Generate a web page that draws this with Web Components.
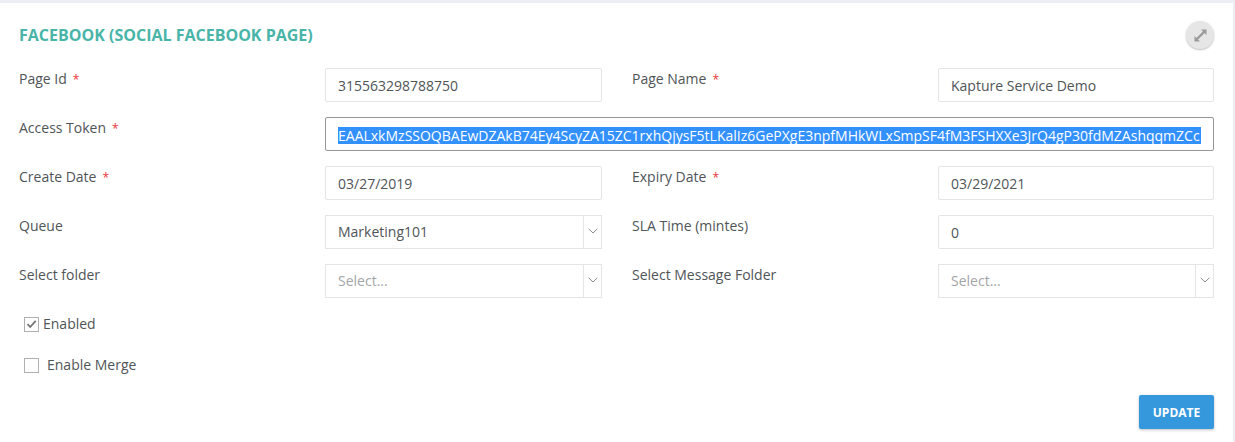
<!DOCTYPE html>
<html>
<head>
<meta charset="utf-8">
<title>Facebook page</title>
<style>
  html, body { margin: 0; padding: 0; background: #fff; }
  body { font-family: "Open Sans", "Liberation Sans", sans-serif; font-size: 14px; color: #505558; }
</style>
</head>
<body>
<fb-card heading="FACEBOOK (SOCIAL FACEBOOK PAGE)">
  <form-label required>Page Id</form-label>
  <text-field>315563298788750</text-field>
  <form-label second required>Page Name</form-label>
  <text-field>Kapture Service Demo</text-field>

  <form-label required>Access Token</form-label>
  <text-field wide selected>EAALxkMzSSOQBAEwDZAkB74Ey4ScyZA15ZC1rxhQjysF5tLKalIz6GePXgE3npfMHkWLxSmpSF4fM3FSHXXe3JrQ4gP30fdMZAshqqmZCc</text-field>

  <form-label required>Create Date</form-label>
  <text-field>03/27/2019</text-field>
  <form-label second required>Expiry Date</form-label>
  <text-field>03/29/2021</text-field>

  <form-label>Queue</form-label>
  <select-field>Marketing101</select-field>
  <form-label second>SLA Time (mintes)</form-label>
  <text-field>0</text-field>

  <form-label>Select folder</form-label>
  <select-field placeholder>Select...</select-field>
  <form-label second>Select Message Folder</form-label>
  <select-field placeholder>Select...</select-field>

  <check-box slot="checks" checked>Enabled</check-box>
  <check-box slot="checks" spaced>Enable Merge</check-box>
  <action-button slot="actions">UPDATE</action-button>
</fb-card>

<script>
// ---- 共通の定義ヘルパー ----
function define(name, css, html, setup) {
  class El extends HTMLElement {
    constructor() {
      super();
      this.attachShadow({ mode: 'open' }).innerHTML = `<style>${css}</style>${html}`;
    }
    connectedCallback() {
      if (setup) setup(this);
    }
  }
  customElements.define(name, El);
}

define('fb-card', `
  :host { display: block; box-sizing: border-box; height: 442px; border-top: 3px solid #eceef3; border-right: 2px solid #eceef3; background: #fff; }
  header { display: flex; justify-content: space-between; align-items: center; height: 65px; padding: 0 19px 0 19px; }
  h2 { margin: 0; font-size: 16px; font-weight: 700; color: #48b5a8; line-height: 22px; position: relative; top: -1px; }
  .expand { width: 28px; height: 28px; border-radius: 50%; background: #e6e6e6; box-shadow: 0 1px 2px rgba(0,0,0,.25); display: flex; align-items: center; justify-content: center; margin-top: -1px; }
  .grid { display: grid; grid-template-columns: 306px 277px 336px 276px; row-gap: 15px; padding-left: 19px; }
  .checks { display: flex; flex-direction: column; padding: 16px 0 0 24px; gap: 21px; }
  .actions { display: flex; justify-content: flex-end; width: 1214px; margin-top: 20px; }
`, `
  <header>
    <h2 id="t"></h2>
    <div class="expand"><svg width="15" height="15" viewBox="0 0 15 15"><path d="M3.5 11.5 11.5 3.5" stroke="#9a9a9a" stroke-width="2.4"/><path d="M8 1.5h5.5V7z M1.5 8v5.5H7z" fill="#9a9a9a"/></svg></div>
  </header>
  <div class="grid"><slot></slot></div>
  <div class="checks"><slot name="checks"></slot></div>
  <div class="actions"><slot name="actions"></slot></div>
`, (el) => {
  el.shadowRoot.getElementById('t').textContent = el.getAttribute('heading');
});

define('form-label', `
  :host { display: block; line-height: 20px; color: #505558; padding-top: 1px; }
  :host([second]) { padding-left: 30px; }
  .req { display: none; color: #e8343a; margin-left: 6px; font-size: 12px; }
  :host([required]) .req { display: inline; }
`, `<slot></slot><span class="req">*</span>`);

define('text-field', `
  :host { display: block; height: 34px; box-sizing: border-box; border: 1px solid #e5e5e5; border-radius: 2px; background: #fff; padding: 0 12px; line-height: 33px; color: #505558; white-space: nowrap; overflow: hidden; }
  :host([wide]) { grid-column: 2 / 5; border-color: #969696; }
  :host([selected]) .v { background: #3390ff; color: #fff; display: block; overflow: hidden; line-height: 17px; margin-top: 9px; }
`, `<span class="v"><slot></slot></span>`);

define('select-field', `
  :host { display: flex; height: 34px; box-sizing: border-box; border: 1px solid #e5e5e5; background: #fff; line-height: 31px; color: #505558; }
  :host([placeholder]) { color: #a3a5a8; }
  .v { flex: 1; padding: 0 12px; white-space: nowrap; overflow: hidden; }
  .arrow { width: 18px; border-left: 1px solid #e5e5e5; display: flex; align-items: center; justify-content: center; padding-bottom: 2px; box-sizing: border-box; }
`, `<div class="v"><slot></slot></div><div class="arrow"><svg width="10" height="6" viewBox="0 0 10 6"><path d="M.6.8 5 5 9.4.8" fill="none" stroke="#8a8a8a" stroke-width="1"/></svg></div>`);

define('check-box', `
  :host { display: flex; align-items: center; height: 20px; color: #505558; line-height: 20px; gap: 4px; }
  :host([spaced]) { gap: 8px; }
  .box { width: 15px; height: 15px; box-sizing: border-box; border: 1px solid #b0b0b0; display: flex; align-items: center; justify-content: center; background: #fff; }
  svg { display: none; }
  :host([checked]) svg { display: block; }
`, `<div class="box"><svg width="11" height="10" viewBox="0 0 11 10"><path d="M1.5 5.2 4.2 8 9.7 1.8" fill="none" stroke="#757575" stroke-width="1.8"/></svg></div><span><slot></slot></span>`);

define('action-button', `
  :host { display: flex; align-items: center; justify-content: center; width: 75px; height: 34px; background: #3598dc; color: #fff; font-size: 12px; font-weight: 700; border-radius: 2px; box-shadow: 0 1px 3px rgba(0,0,0,.25); }
`, `<slot></slot>`);
</script>
</body>
</html>
